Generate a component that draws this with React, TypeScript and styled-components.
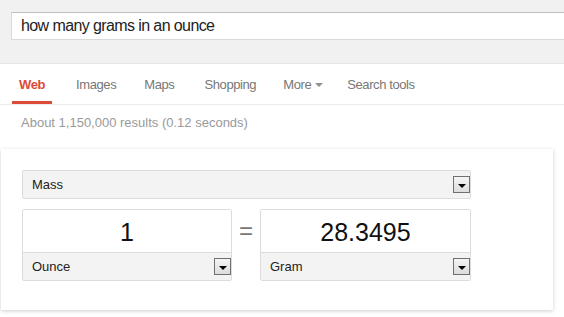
import React from 'react'
import styled, { createGlobalStyle } from 'styled-components'

const GlobalStyle = createGlobalStyle`
  html, body {
    margin: 0;
    padding: 0;
    background: #fff;
    font-family: "Liberation Sans", Arial, sans-serif;
    color: #222;
  }
`

const Page = styled.div`
  width: 564px;
  height: 317px;
  overflow: hidden;
`

const Header = styled.div`
  height: 64px;
  background: #f1f1f1;
  border-bottom: 1px solid #e5e5e5;
  padding: 12px 0 0 11px;
  box-sizing: border-box;
`

const SearchBox = styled.div`
  height: 28px;
  width: 600px;
  background: #fff;
  border: 1px solid #d9d9d9;
  border-top-color: #c0c0c0;
  box-sizing: border-box;
  display: flex;
  align-items: center;
  padding-left: 9px;
  font-size: 16px;
  letter-spacing: -0.6px;
  color: #222;
`

const TabBar = styled.div`
  height: 41px;
  display: flex;
  align-items: stretch;
  padding-left: 12px;
  border-bottom: 1px solid #ebebeb;
  box-sizing: border-box;
`

const Tab = styled.div<{ $active?: boolean; $gap: number }>`
  display: flex;
  align-items: center;
  padding: 3px 7px 0;
  margin-left: ${({ $gap }) => $gap}px;
  font-size: 13px;
  letter-spacing: -0.4px;
  font-weight: ${({ $active }) => ($active ? 'bold' : 'normal')};
  color: ${({ $active }) => ($active ? '#dd4b39' : '#777')};
  border-bottom: 3px solid ${({ $active }) => ($active ? '#dd4b39' : 'transparent')};
`

const Caret = styled.span`
  display: inline-block;
  margin-left: 4px;
  margin-top: 1px;
  border-left: 4px solid transparent;
  border-right: 4px solid transparent;
  border-top: 4px solid #909090;
`

const Stats = styled.div`
  padding: 10px 0 0 21px;
  height: 44px;
  box-sizing: border-box;
  font-size: 13px;
  color: #999;
`

const Card = styled.div`
  margin-left: 1px;
  width: 552px;
  height: 161px;
  box-sizing: border-box;
  background: #fff;
  box-shadow: 0 1px 4px rgba(0, 0, 0, 0.2);
  padding: 21px 0 0 21px;
`

const Select = styled.div`
  width: 449px;
  height: 29px;
  box-sizing: border-box;
  background: #f3f3f3;
  border: 1px solid #dcdcdc;
  border-radius: 2px;
  display: flex;
  align-items: center;
  justify-content: space-between;
  padding: 0 0 0 9px;
  font-size: 13px;
  color: #222;
`

const DropButton = styled.div`
  width: 17px;
  height: 17px;
  box-sizing: border-box;
  border: 1px solid #707070;
  background: linear-gradient(#f4f4f4, #dcdcdc);
  display: flex;
  align-items: center;
  justify-content: center;

  &::after {
    content: '';
    margin-top: 2px;
    border-left: 4px solid transparent;
    border-right: 4px solid transparent;
    border-top: 4px solid #000;
  }
`

const Row = styled.div`
  display: flex;
  align-items: flex-start;
  margin-top: 10px;
`

const UnitBox = styled.div<{ $width: number }>`
  width: ${({ $width }) => $width}px;
  height: 72px;
  box-sizing: border-box;
  border: 1px solid #dcdcdc;
  border-radius: 2px;
  display: flex;
  flex-direction: column;
  overflow: hidden;
`

const Value = styled.div`
  height: 42px;
  display: flex;
  align-items: center;
  justify-content: center;
  padding-top: 2px;
  box-sizing: border-box;
  font-size: 25px;
  color: #111;
  background: #fff;
`

const UnitSelect = styled.div`
  flex: 1;
  border-top: 1px solid #dcdcdc;
  background: #f3f3f3;
  display: flex;
  align-items: center;
  justify-content: space-between;
  padding-left: 9px;
  font-size: 13px;
  color: #222;
`

const Equals = styled.div`
  width: 28px;
  height: 44px;
  display: flex;
  align-items: center;
  justify-content: center;
  font-size: 24px;
  color: #777;
`

const tabs = [
  { label: 'Web', gap: 0, active: true },
  { label: 'Images', gap: 17 },
  { label: 'Maps', gap: 14 },
  { label: 'Shopping', gap: 16 },
  { label: 'More', gap: 13, caret: true },
  { label: 'Search tools', gap: 10 },
]

const App: React.FC = () => {
  return (
    <Page>
      <GlobalStyle />
      <Header>
        <SearchBox>how many grams in an ounce</SearchBox>
      </Header>
      <TabBar>
        {tabs.map((t) => (
          <Tab key={t.label} $active={t.active} $gap={t.gap}>
            {t.label}
            {t.caret && <Caret />}
          </Tab>
        ))}
      </TabBar>
      <Stats>About 1,150,000 results (0.12 seconds)</Stats>
      <Card>
        <Select>
          Mass
          <DropButton />
        </Select>
        <Row>
          <UnitBox $width={210}>
            <Value>1</Value>
            <UnitSelect>
              Ounce
              <DropButton />
            </UnitSelect>
          </UnitBox>
          <Equals>=</Equals>
          <UnitBox $width={211}>
            <Value>28.3495</Value>
            <UnitSelect>
              Gram
              <DropButton />
            </UnitSelect>
          </UnitBox>
        </Row>
      </Card>
    </Page>
  )
}

export default App
